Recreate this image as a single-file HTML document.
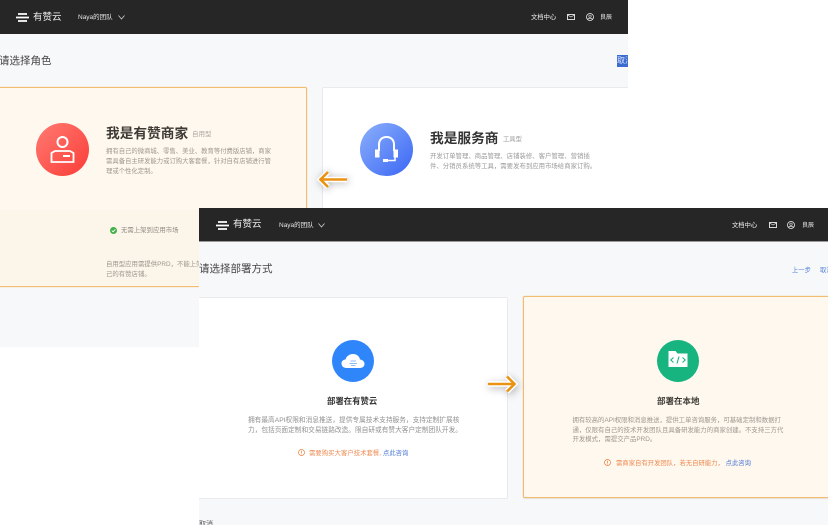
<!DOCTYPE html>
<html><head><meta charset="utf-8">
<style>
html,body{margin:0;padding:0;background:#fff}
body{width:828px;height:531px;position:relative;overflow:hidden;font-family:"Liberation Sans","Noto Sans CJK SC",sans-serif;}
.a{position:absolute;white-space:nowrap}
.w{position:absolute;overflow:hidden}
.t{filter:blur(.35px)}
svg{position:absolute;display:block;overflow:visible}
</style></head><body>

<!-- top screenshot -->
<div class="w" style="left:0;top:0;width:628px;height:347px;background:#f7f8fa">
  <div class="a" style="left:0;top:0;width:628px;height:34px;background:#262626"></div>
  <svg style="left:16px;top:13px" width="13" height="10"><path d="M2 1H11M0 4.500H13M2 8H11" stroke="#fff" stroke-width="1.800" fill="none"/></svg>
  <div class="a t" style="left:33px;top:11px;font-size:9.500px;line-height:14px;color:#eee">有赞云</div>
  <div class="a t" style="left:78px;top:12px;font-size:6.500px;line-height:12px;color:#e6e6e6">Naya的团队</div>
  <svg style="left:118px;top:15px" width="7" height="5"><path d="M.5.500L3.500 4L6.500.500" stroke="#ccc" fill="none" stroke-width=".8"/></svg>
  <div class="a t" style="left:531px;top:12px;font-size:6.300px;line-height:12px;color:#f2f2f2">文档中心</div>
  <svg style="left:567px;top:14px" width="8" height="6"><rect x=".5" y=".5" width="7" height="5" fill="none" stroke="#eee" stroke-width=".9"/><path d="M.5 1L4 3L7.500 1" stroke="#eee" fill="none" stroke-width=".7"/></svg>
  <svg style="left:586px;top:13px" width="8" height="8"><circle cx="4" cy="4" r="3.500" fill="none" stroke="#eee" stroke-width=".8"/><circle cx="4" cy="3.200" r="1.200" fill="none" stroke="#eee" stroke-width=".6"/><path d="M1.600 6.400C2.400 5 5.600 5 6.400 6.400" stroke="#eee" fill="none" stroke-width=".6"/></svg>
  <div class="a t" style="left:600px;top:12px;font-size:6px;line-height:12px;color:#f2f2f2">良辰</div>

  <div class="a t" style="left:-1px;top:53px;font-size:10.500px;line-height:16px;color:#444">请选择角色</div>
  <div class="a" style="left:617px;top:55px;width:11px;height:12px;background:#3c6bd0;overflow:hidden;color:#dde6fa;font-size:8px;line-height:12px">取消</div>

  <!-- merchant card -->
  <div class="a" style="left:-4px;top:87px;width:309px;height:198px;border:1px solid #f2bd73;border-radius:2px;background:#fff8ef;box-shadow:0 0 1px #f2bd73"></div>
  <div class="a" style="left:0;top:210px;width:305px;height:75px;background:#fcf5ea"></div>
  <div class="a" style="left:36px;top:123px;width:53px;height:53px;border-radius:50%;background:linear-gradient(135deg,#ff7b72,#fb3c37)"></div>
  <svg style="left:50px;top:135px" width="26" height="28"><circle cx="12.500" cy="7" r="5" fill="none" stroke="#fff" stroke-width="2"/><path d="M5 16H20L23.500 18V27H1.500V18Z" fill="none" stroke="#fff" stroke-width="1.800"/><rect x="13" y="20" width="7" height="2" fill="#fff"/></svg>
  <div class="a t" style="left:106px;top:125px;font-size:13.700px;line-height:18px;font-weight:bold;color:#3d3a35">我是有赞商家</div>
  <div class="a t" style="left:192px;top:130px;font-size:6.500px;line-height:10px;color:#a9a69f">自用型</div>
  <div class="a t" style="left:106px;top:147px;font-size:6.350px;line-height:9.900px;color:#9c978e">拥有自己的微商城、零售、美业、教育等付费版店铺，商家<br>需具备自主研发能力或订购大客套餐，针对自有店铺进行管<br>理或个性化定制。</div>
  <svg style="left:110px;top:227px" width="7" height="7"><circle cx="3.500" cy="3.500" r="3.500" fill="#42b04a"/><path d="M1.800 3.600L3.100 4.800L5.300 2.400" stroke="#fff" fill="none" stroke-width=".9"/></svg>
  <div class="a t" style="left:121px;top:226px;font-size:6.400px;line-height:10px;color:#8f8b83">无需上架到应用市场</div>
  <div class="a t" style="left:106px;top:260px;font-size:6.400px;line-height:9.800px;color:#9c978e">自用型应用需提供PRD，不能上架到应用市场，仅限自<br>己的有赞店铺。</div>

  <!-- service card -->
  <div class="a" style="left:322px;top:87px;width:320px;height:260px;background:#fff;border:1px solid #e9eaec;border-radius:2px"></div>
  <div class="a" style="left:360px;top:123px;width:53px;height:53px;border-radius:50%;background:linear-gradient(135deg,#8cb0fb,#3a66f5)"></div>
  <svg style="left:374px;top:135px" width="26" height="28"><path d="M5 16V9.500C5 4.500 8.500 2 12.500 2S20 4.500 20 9.500V16" fill="none" stroke="#fff" stroke-width="2"/><rect x="1" y="14.500" width="4.500" height="8" fill="#fff"/><rect x="19.500" y="14.500" width="4.500" height="8" fill="#fff"/><path d="M21 22V25.500H12" fill="none" stroke="#fff" stroke-width="1.500"/><rect x="9" y="24" width="5" height="3" fill="#fff"/></svg>
  <div class="a t" style="left:430px;top:130px;font-size:13.700px;line-height:18px;font-weight:bold;color:#333">我是服务商</div>
  <div class="a t" style="left:503px;top:135px;font-size:6.300px;line-height:10px;color:#999">工具型</div>
  <div class="a t" style="left:430px;top:152px;font-size:6.400px;line-height:9.900px;color:#999">开发订单管理、商品管理、店铺装修、客户管理、营销插<br>件、分销员系统等工具，需要发布到应用市场给商家订购。</div>

  <!-- left arrow -->
  <svg style="left:318px;top:170px;filter:drop-shadow(1px 1px 4px rgba(0,0,0,.28))" width="30" height="20"><path d="M29 9.500H3M10 2L2.500 9.500L10 17" fill="none" stroke="#fff" stroke-width="5.500"/><path d="M29 9.500H3M10 2L2.500 9.500L10 17" fill="none" stroke="#ec9212" stroke-width="2.600"/></svg>
</div>

<!-- bottom screenshot -->
<div class="w" style="left:199px;top:208px;width:629px;height:317px;background:#f7f8fa">
  <div class="a" style="left:0;top:0;width:629px;height:33px;background:#262626;border-bottom:1px solid #999"></div>
  <svg style="left:17px;top:13px" width="13" height="10"><path d="M2 1H11M0 4.500H13M2 8H11" stroke="#fff" stroke-width="1.800" fill="none"/></svg>
  <div class="a t" style="left:34px;top:10px;font-size:9.500px;line-height:14px;color:#eee">有赞云</div>
  <div class="a t" style="left:80px;top:12px;font-size:6.500px;line-height:12px;color:#e6e6e6">Naya的团队</div>
  <svg style="left:119px;top:15px" width="7" height="5"><path d="M.5.500L3.500 4L6.500.500" stroke="#ccc" fill="none" stroke-width=".8"/></svg>
  <div class="a t" style="left:533px;top:12px;font-size:6.300px;line-height:12px;color:#f2f2f2">文档中心</div>
  <svg style="left:570px;top:14px" width="8" height="6"><rect x=".5" y=".5" width="7" height="5" fill="none" stroke="#eee" stroke-width=".9"/><path d="M.5 1L4 3L7.500 1" stroke="#eee" fill="none" stroke-width=".7"/></svg>
  <svg style="left:588px;top:13px" width="8" height="8"><circle cx="4" cy="4" r="3.500" fill="none" stroke="#eee" stroke-width=".8"/><circle cx="4" cy="3.200" r="1.200" fill="none" stroke="#eee" stroke-width=".6"/><path d="M1.600 6.400C2.400 5 5.600 5 6.400 6.400" stroke="#eee" fill="none" stroke-width=".6"/></svg>
  <div class="a t" style="left:603px;top:12px;font-size:6px;line-height:12px;color:#f2f2f2">良辰</div>

  <div class="a t" style="left:0;top:53px;font-size:10.500px;line-height:16px;color:#444">请选择部署方式</div>
  <div class="a t" style="left:593px;top:57px;font-size:6.300px;line-height:12px;color:#4f7fd8">上一步</div>
  <div class="a t" style="left:621px;top:57px;font-size:6.300px;line-height:12px;color:#4f7fd8">取消</div>

  <!-- cloud card -->
  <div class="a" style="left:-4px;top:89px;width:311px;height:200px;background:#fff;border:1px solid #e9eaec;border-radius:2px"></div>
  <div class="a" style="left:133px;top:132px;width:42px;height:42px;border-radius:50%;background:#2f86fb"></div>
  <svg style="left:142px;top:145px" width="24" height="16"><path d="M5.500 15C2.500 15 .5 13 .5 10.500C.5 8 2.500 6.500 4.500 6.500C5.500 3 8.500 1 12 1C15.500 1 18.500 3.300 19 6.500C21.500 6.800 23.500 8.500 23.500 11C23.500 13.200 21.500 15 19 15Z" fill="#fff"/><path d="M9.500 8H15M8.500 10.500H16M10 12.500H14.500" stroke="#8cbcf8" stroke-width="1.100"/></svg>
  <div class="a t" style="left:128px;top:187px;font-size:8.400px;line-height:12px;font-weight:bold;color:#333">部署在有赞云</div>
  <div class="a t" style="left:49px;top:208px;font-size:6.700px;line-height:9.700px;color:#919191">拥有最高API权限和消息推送，提供专属技术支持服务，支持定制扩展核<br>力，包括页面定制和交易链路改造。限自研或有赞大客户定制团队开发。</div>
  <svg style="left:99px;top:241px" width="7" height="7"><circle cx="3.500" cy="3.500" r="3" fill="none" stroke="#ee7d3a" stroke-width=".7"/><path d="M3.500 1.700V4.200M3.500 4.800V5.500" stroke="#ee7d3a" stroke-width=".7"/></svg>
  <div class="a t" style="left:110px;top:241px;font-size:6.400px;line-height:10px;color:#ee8a50">需要购买大客户技术套餐, <span style="color:#4d79d6">点此咨询</span></div>

  <!-- local card -->
  <div class="a" style="left:324px;top:88px;width:320px;height:200px;background:#fff8ef;border:1px solid #f2bd73;border-radius:2px;box-shadow:0 0 1px #f2bd73,0 1px 1px rgba(0,0,0,.08)"></div>
  <div class="a" style="left:458px;top:132px;width:42px;height:42px;border-radius:50%;background:#18b47f"></div>
  <svg style="left:469px;top:142px" width="20" height="18"><path d="M.5 1H7.500L9.500 3.500H19.500V17H.5Z" fill="#fff"/><path d="M5.500 7.500L2.800 10L5.500 12.500M14.500 7.500L17.200 10L14.500 12.500M11 6.500L9 13.500" fill="none" stroke="#18b47f" stroke-width="1.100"/></svg>
  <div class="a t" style="left:458px;top:187px;font-size:8.500px;line-height:12px;font-weight:bold;color:#3d3a35">部署在本地</div>
  <div class="a t" style="left:373.500px;top:208px;font-size:6.400px;line-height:9.700px;color:#9c978e">拥有较高的API权限和消息推送，提供工单咨询服务，可基础定制和数据打<br>通，仅限有自己的技术开发团队且具备研发能力的商家创建。不支持三方代<br>开发模式，需提交产品PRD。</div>
  <svg style="left:405px;top:251px" width="7" height="7"><circle cx="3.500" cy="3.500" r="3" fill="none" stroke="#ee7d3a" stroke-width=".7"/><path d="M3.500 1.700V4.200M3.500 4.800V5.500" stroke="#ee7d3a" stroke-width=".7"/></svg>
  <div class="a t" style="left:417px;top:251px;font-size:6.350px;line-height:10px;color:#ee8a50">需商家自有开发团队，若无自研能力， <span style="color:#4d79d6">点此咨询</span></div>

  <!-- right arrow -->
  <svg style="left:288px;top:166px;filter:drop-shadow(1px 2px 4px rgba(0,0,0,.28))" width="30" height="20"><path d="M1 10H27M20 2.500L27.500 10L20 17.500" fill="none" stroke="#fff" stroke-width="5.500"/><path d="M1 10H27M20 2.500L27.500 10L20 17.500" fill="none" stroke="#ec9212" stroke-width="2.600"/></svg>
</div>
<div class="a" style="left:199px;top:520px;width:16px;height:5px;overflow:hidden;font-size:7px;line-height:9px;color:#555">取消</div>
</body></html>
